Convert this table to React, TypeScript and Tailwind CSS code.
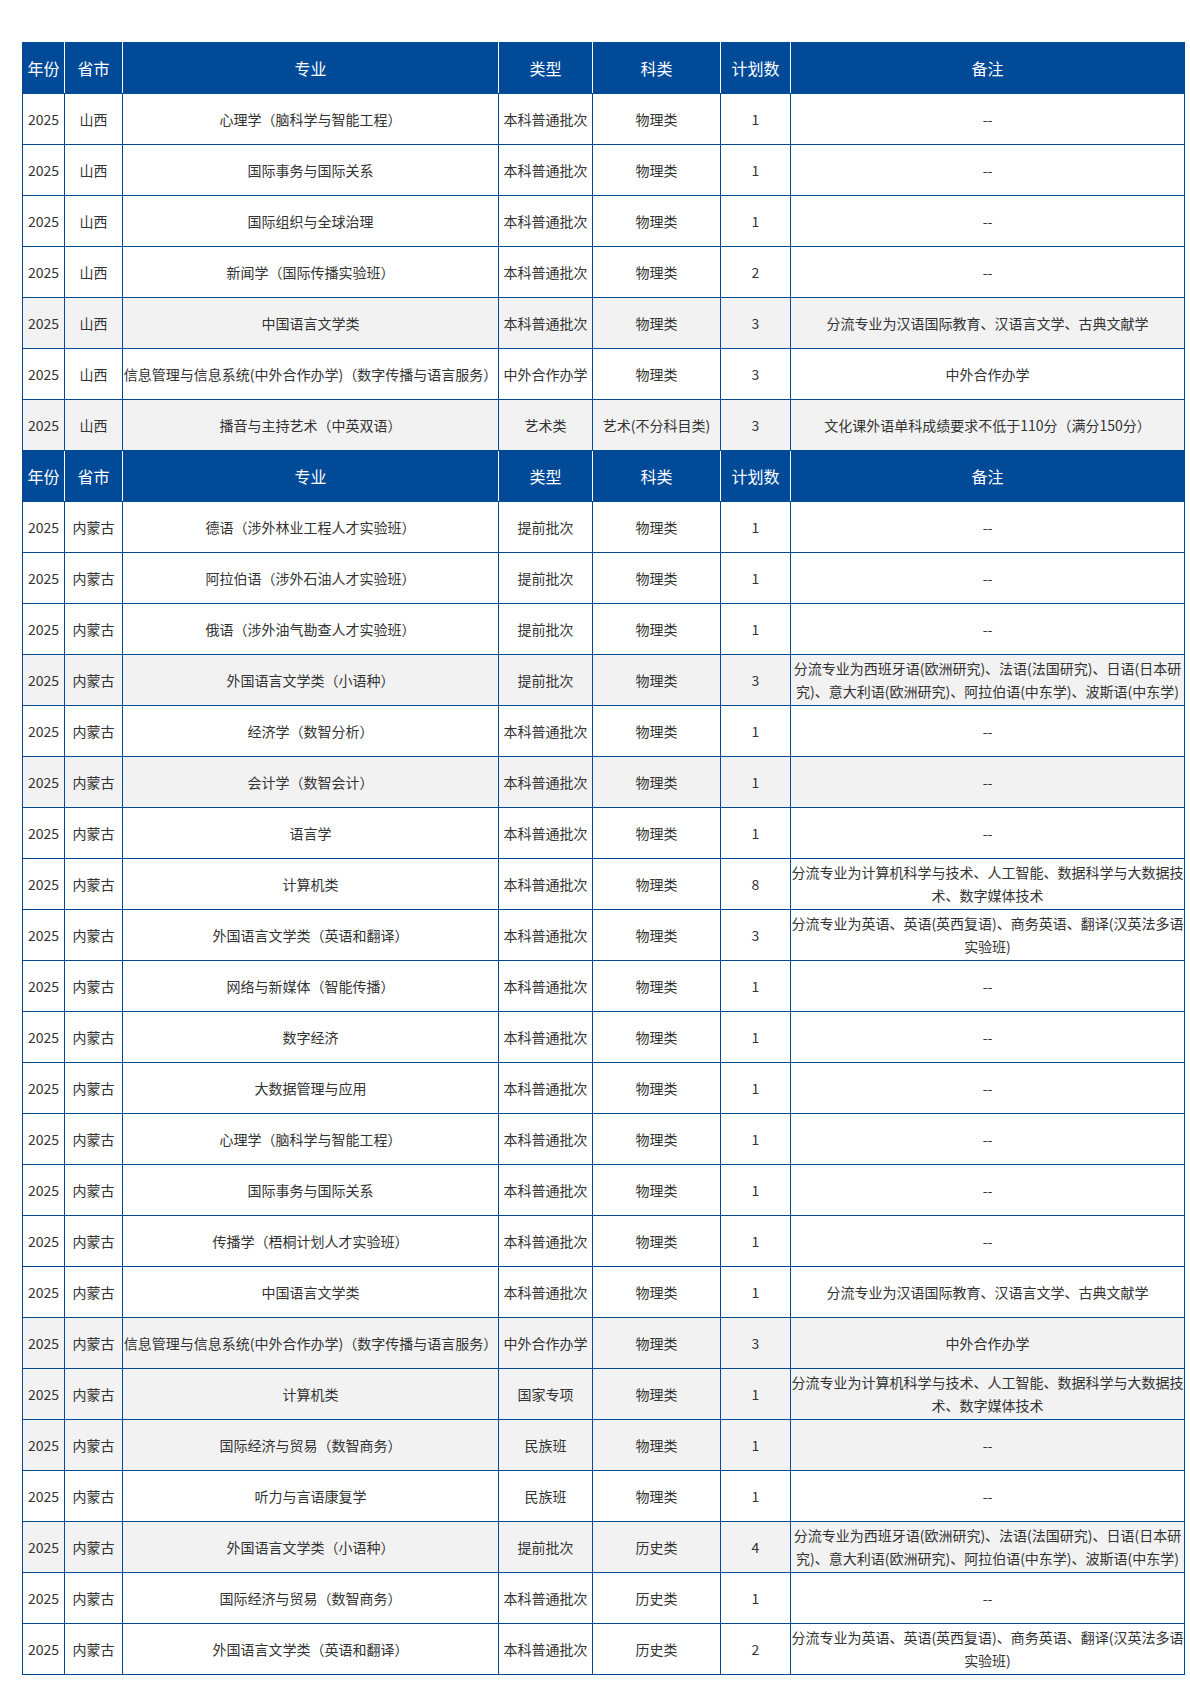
import React from "react";

type Row = {
  major: string;
  type: string;
  subject: string;
  count: string;
  note: string;
  gray?: boolean;
};

const DASH = "--";
const N1 = "分流专业为汉语国际教育、汉语言文学、古典文献学";
const N2 =
  "分流专业为西班牙语(欧洲研究)、法语(法国研究)、日语(日本研究)、意大利语(欧洲研究)、阿拉伯语(中东学)、波斯语(中东学)";
const N3 = "分流专业为计算机科学与技术、人工智能、数据科学与大数据技术、数字媒体技术";
const N4 = "分流专业为英语、英语(英西复语)、商务英语、翻译(汉英法多语实验班)";
const INFO = "信息管理与信息系统(中外合作办学)（数字传播与语言服务）";
const BK = "本科普通批次";
const TQ = "提前批次";
const WL = "物理类";
const LS = "历史类";

const shanxi: Row[] = [
  { major: "心理学（脑科学与智能工程）", type: BK, subject: WL, count: "1", note: DASH },
  { major: "国际事务与国际关系", type: BK, subject: WL, count: "1", note: DASH },
  { major: "国际组织与全球治理", type: BK, subject: WL, count: "1", note: DASH },
  { major: "新闻学（国际传播实验班）", type: BK, subject: WL, count: "2", note: DASH },
  { major: "中国语言文学类", type: BK, subject: WL, count: "3", note: N1, gray: true },
  { major: INFO, type: "中外合作办学", subject: WL, count: "3", note: "中外合作办学" },
  {
    major: "播音与主持艺术（中英双语）",
    type: "艺术类",
    subject: "艺术(不分科目类)",
    count: "3",
    note: "文化课外语单科成绩要求不低于110分（满分150分）",
    gray: true,
  },
];

const neimenggu: Row[] = [
  { major: "德语（涉外林业工程人才实验班）", type: TQ, subject: WL, count: "1", note: DASH },
  { major: "阿拉伯语（涉外石油人才实验班）", type: TQ, subject: WL, count: "1", note: DASH },
  { major: "俄语（涉外油气勘查人才实验班）", type: TQ, subject: WL, count: "1", note: DASH },
  { major: "外国语言文学类（小语种）", type: TQ, subject: WL, count: "3", note: N2, gray: true },
  { major: "经济学（数智分析）", type: BK, subject: WL, count: "1", note: DASH },
  { major: "会计学（数智会计）", type: BK, subject: WL, count: "1", note: DASH, gray: true },
  { major: "语言学", type: BK, subject: WL, count: "1", note: DASH },
  { major: "计算机类", type: BK, subject: WL, count: "8", note: N3 },
  { major: "外国语言文学类（英语和翻译）", type: BK, subject: WL, count: "3", note: N4 },
  { major: "网络与新媒体（智能传播）", type: BK, subject: WL, count: "1", note: DASH },
  { major: "数字经济", type: BK, subject: WL, count: "1", note: DASH },
  { major: "大数据管理与应用", type: BK, subject: WL, count: "1", note: DASH },
  { major: "心理学（脑科学与智能工程）", type: BK, subject: WL, count: "1", note: DASH },
  { major: "国际事务与国际关系", type: BK, subject: WL, count: "1", note: DASH },
  { major: "传播学（梧桐计划人才实验班）", type: BK, subject: WL, count: "1", note: DASH },
  { major: "中国语言文学类", type: BK, subject: WL, count: "1", note: N1 },
  { major: INFO, type: "中外合作办学", subject: WL, count: "3", note: "中外合作办学", gray: true },
  { major: "计算机类", type: "国家专项", subject: WL, count: "1", note: N3, gray: true },
  { major: "国际经济与贸易（数智商务）", type: "民族班", subject: WL, count: "1", note: DASH, gray: true },
  { major: "听力与言语康复学", type: "民族班", subject: WL, count: "1", note: DASH },
  { major: "外国语言文学类（小语种）", type: TQ, subject: LS, count: "4", note: N2, gray: true },
  { major: "国际经济与贸易（数智商务）", type: BK, subject: LS, count: "1", note: DASH },
  { major: "外国语言文学类（英语和翻译）", type: BK, subject: LS, count: "2", note: N4 },
];

const headers = ["年份", "省市", "专业", "类型", "科类", "计划数", "备注"];

function HeaderRow() {
  return (
    <tr className="h-[51px] bg-[#004a98]">
      {headers.map((h, i) => (
        <th
          key={h}
          className={
            "p-0 text-center align-middle text-[16px] font-normal text-white border border-[#004a98] " +
            (i < headers.length - 1 ? "border-r-white" : "")
          }
        >
          {h}
        </th>
      ))}
    </tr>
  );
}

function BodyRow({ row, prov }: { row: Row; prov: string }) {
  const cls =
    "p-0 text-center align-middle border border-[#004a98] text-[14px] leading-[23px] text-[#333333]";
  return (
    <tr className={"h-[51px] " + (row.gray ? "bg-[#f2f2f2]" : "bg-white")}>
      <td className={cls}>2025</td>
      <td className={cls}>{prov}</td>
      <td className={cls + " whitespace-nowrap"}>{row.major}</td>
      <td className={cls + " whitespace-nowrap"}>{row.type}</td>
      <td className={cls + " whitespace-nowrap"}>{row.subject}</td>
      <td className={cls}>{row.count}</td>
      <td className={cls}>{row.note}</td>
    </tr>
  );
}

export default function App() {
  return (
    <div
      className="w-[1190px] min-h-[1683px] bg-white pt-[42px] pl-[22px]"
      style={{ fontFamily: '"Microsoft YaHei", "Noto Sans CJK SC", sans-serif' }}
    >
      <table className="table-fixed border-collapse w-[1162px]">
        <colgroup>
          <col className="w-[42px]" />
          <col className="w-[58px]" />
          <col className="w-[376px]" />
          <col className="w-[94px]" />
          <col className="w-[128px]" />
          <col className="w-[70px]" />
          <col className="w-[394px]" />
        </colgroup>
        <tbody>
          <HeaderRow />
          {shanxi.map((r, i) => (
            <BodyRow key={"s" + i} row={r} prov="山西" />
          ))}
          <HeaderRow />
          {neimenggu.map((r, i) => (
            <BodyRow key={"n" + i} row={r} prov="内蒙古" />
          ))}
        </tbody>
      </table>
    </div>
  );
}
